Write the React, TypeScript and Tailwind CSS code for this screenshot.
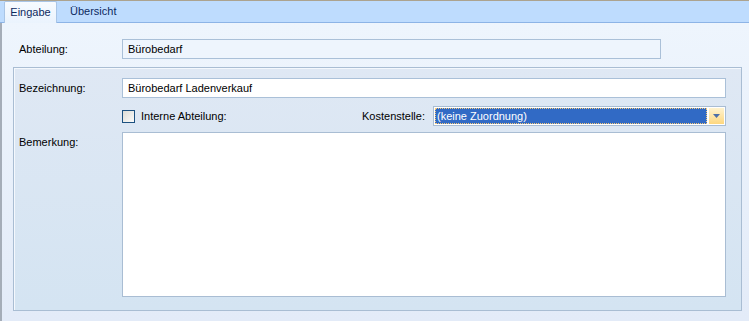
import React from "react";

export default function App() {
  const font = { fontFamily: '"Liberation Sans", Arial, sans-serif' };
  return (
    <div className="w-[749px] h-[321px] flex flex-col text-[11px] text-black overflow-hidden" style={font}>
      <div className="h-px bg-[#aca38f]" />
      {/* tab strip */}
      <div className="h-[22px] bg-[#bedcfe] border-b border-[#8db4e6] flex items-end pl-[4px] relative">
        <div className="relative z-10 h-[22px] w-[53px] -mb-px border border-b-0 border-[#a9c5e6] rounded-t-[2px] bg-gradient-to-b from-[#f7fbff] to-[#eaf3fd] flex items-center justify-center text-[#0d2a5e]">
          Eingabe
        </div>
        <div className="h-[21px] flex items-center pl-[13px] text-[#0d2a5e]">Übersicht</div>
      </div>
      {/* content */}
      <div className="flex-1 border-l-2 border-[#a5adb8] bg-gradient-to-b from-[#eef5fd] to-[#e3ebf8] pt-[16px] pl-[11px] pr-[5px]">
        <div className="flex items-center h-[20px] pl-[6px]">
          <div className="w-[103px]">Abteilung:</div>
          <div className="w-[539px] h-[20px] border border-[#aac0d8] bg-[#eef5fd] flex items-center pl-[5px]">Bürobedarf</div>
        </div>
        <div className="mt-[8px] w-[729px] h-[244px] border border-[#a9bdd3] bg-gradient-to-b from-[#dfe8f4] to-[#d4e4f2] shadow-[inset_1px_1px_0_#f4f8fd] pt-[10px] pl-[5px]">
          <div className="flex items-center h-[20px]">
            <div className="w-[103px]">Bezeichnung:</div>
            <div className="w-[604px] h-[20px] border border-[#aac0d8] bg-white flex items-center pl-[5px]">Bürobedarf Ladenverkauf</div>
          </div>
          <div className="flex items-center h-[20px] mt-[8px]">
            <div className="w-[103px]" />
            <div className="w-[13px] h-[13px] border border-[#1c5180] bg-gradient-to-br from-[#dcdcd6] to-[#fbfbfa]" />
            <div className="ml-[6px] w-[221px]">Interne Abteilung:</div>
            <div className="w-[71px]">Kostenstelle:</div>
            <div className="w-[293px] h-[20px] border border-[#a9bdd3] bg-white flex p-[1px]">
              <div className="flex-1 bg-[#316ac5] text-white flex items-center pl-[1px] outline-1 outline-dotted outline-[#f5c878] -outline-offset-1 border border-dotted border-[#2a2a2a]">
                (keine Zuordnung)
              </div>
              <div className="w-[15px] ml-[2px] bg-gradient-to-b from-[#fff3cf] to-[#fdd77e] flex items-center justify-center">
                <svg width="7" height="4" viewBox="0 0 7 4"><path d="M0 0h7L3.5 4z" fill="#4d6fa8" /></svg>
              </div>
            </div>
          </div>
          <div className="flex mt-[6px]">
            <div className="w-[103px] pt-[2px]">Bemerkung:</div>
            <div className="w-[604px] h-[165px] border border-[#a9bdd3] bg-white" />
          </div>
        </div>
      </div>
    </div>
  );
}
